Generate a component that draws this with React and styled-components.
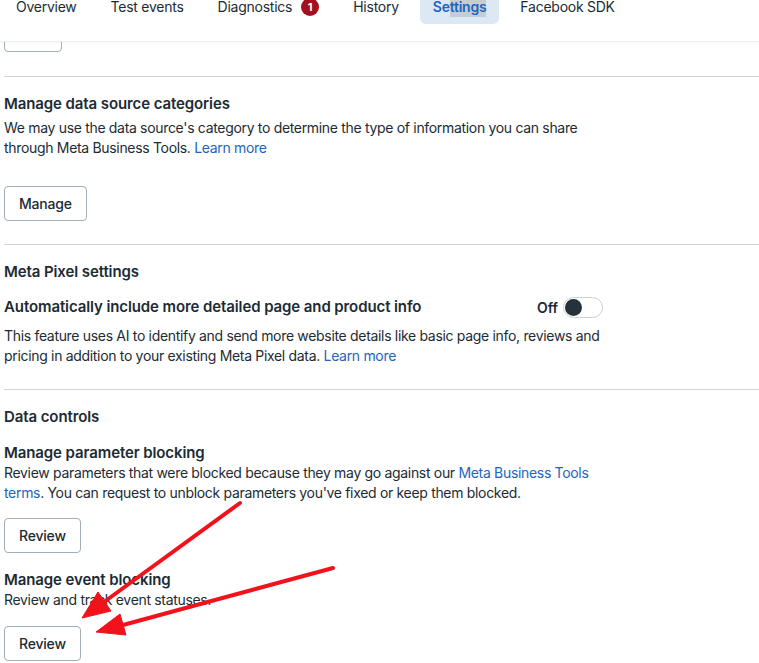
import styled, { createGlobalStyle } from "styled-components";

const Global = createGlobalStyle`
  body {
    margin: 0;
    background: #fff;
    font-family: Inter, "Noto Sans", "Liberation Sans", sans-serif;
    color: #1c2b33;
  }
`;

const Page = styled.div`
  position: relative;
  width: 759px;
  height: 663px;
  overflow: hidden;
  background: #fff;
`;

const TabBar = styled.nav`
  position: relative;
  z-index: 2;
  height: 41px;
  display: flex;
  align-items: flex-start;
  gap: 8px;
  padding-left: 3px;
  background: #fff;
  border-bottom: 1px solid #eceef0;
  box-shadow: 0 1px 2px rgba(0, 0, 0, 0.04);
`;

const Tab = styled.div`
  height: 24px;
  display: flex;
  align-items: flex-start;
  gap: 9px;
  padding: 0 13px;
  font-size: 14px;
  line-height: 14px;
  letter-spacing: -0.25px;
  font-weight: ${(p) => (p.$active ? 600 : 400)};
  color: ${(p) => (p.$active ? "#1d65c1" : "#1c2b33")};
  background: ${(p) => (p.$active ? "#dce8f4" : "transparent")};
  border-radius: 0 0 6px 6px;
`;

const Selected = styled.span`
  background: #c6ccd2;
  padding-bottom: 2px;
`;

const Badge = styled.span`
  width: 18px;
  height: 18px;
  margin-top: -2px;
  border-radius: 50%;
  background: #a3101e;
  color: #fff;
  font-size: 11px;
  font-weight: 700;
  line-height: 18px;
  text-align: center;
  letter-spacing: 0;
`;

const Content = styled.main`
  position: relative;
  z-index: 1;
  padding-left: 4px;
`;

const Button = styled.button`
  display: block;
  height: 35px;
  padding: 0 14px;
  border: 1px solid #a3adb6;
  border-radius: 4px;
  background: #fff;
  font-family: inherit;
  font-size: 14px;
  font-weight: 500;
  letter-spacing: -0.2px;
  color: #1c2b33;
  margin-top: ${(p) => p.$mt || 0}px;
`;

const PeekButton = styled(Button)`
  width: 58px;
  margin-top: -25px;
`;

const Section = styled.section`
  border-top: ${(p) => (p.$first ? "none" : "1px solid #cfd5db")};
  padding: ${(p) => (p.$first ? "0 0 24px" : "17px 0 23px")};
`;

const Inner = styled.div`
  max-width: 604px;
`;

const Title = styled.h2`
  margin: 0;
  font-size: 15px;
  line-height: 20px;
  font-weight: 600;
  letter-spacing: -0.1px;
`;

const SubTitle = styled.h3`
  margin: ${(p) => p.$mt || 0}px 0 0;
  font-size: 15px;
  line-height: 20px;
  font-weight: 600;
  letter-spacing: -0.1px;
`;

const Text = styled.p`
  margin: ${(p) => p.$mt || 0}px 0 0;
  font-size: 14px;
  line-height: 20px;
  letter-spacing: -0.32px;
`;

const Link = styled.a`
  color: #1d65c1;
  text-decoration: none;
`;

const ToggleRow = styled.div`
  margin-top: 15px;
  max-width: 599px;
  display: flex;
  align-items: center;
  justify-content: space-between;
  height: 20px;
`;

const ToggleWrap = styled.div`
  display: flex;
  align-items: center;
  gap: 5px;
  font-size: 14px;
  font-weight: 600;
`;

const Track = styled.span`
  width: 36px;
  height: 19px;
  border: 1px solid #c9d0d6;
  border-radius: 11px;
  background: #fff;
  display: flex;
  align-items: center;
  padding: 0 1px;
`;

const Knob = styled.span`
  width: 17px;
  height: 17px;
  border-radius: 50%;
  background: #25323a;
`;

const Overlay = styled.svg`
  position: absolute;
  left: 0;
  top: 0;
  z-index: 3;
  pointer-events: none;
`;

const tabs = ["Overview", "Test events", "Diagnostics", "History", "Settings", "Facebook SDK"];

const Arrow = ({ x1, y1, tip, base, c1, c2 }) => (
  <g fill="#f2121c" stroke="#f2121c" strokeLinejoin="round">
    <line x1={x1} y1={y1} x2={base[0]} y2={base[1]} strokeWidth="4" strokeLinecap="round" />
    <polygon points={`${tip[0]},${tip[1]} ${c1[0]},${c1[1]} ${c2[0]},${c2[1]}`} strokeWidth="1" />
  </g>
);

const App = () => {
  return (
    <Page>
      <Global />
      <TabBar>
        {tabs.map((t) => (
          <Tab key={t} $active={t === "Settings"}>
            {t === "Settings" ? (
              <span>
                Se<Selected>ttings</Selected>
              </span>
            ) : (
              t
            )}
            {t === "Diagnostics" && <Badge>1</Badge>}
          </Tab>
        ))}
      </TabBar>

      <Content>
        <Section $first>
          <PeekButton />
        </Section>

        <Section>
          <Inner>
            <Title>Manage data source categories</Title>
            <Text $mt={4}>
              We may use the data source's category to determine the type of information you can share
              through Meta Business Tools. <Link>Learn more</Link>
            </Text>
            <Button $mt={28}>Manage</Button>
          </Inner>
        </Section>

        <Section>
          <Inner>
            <Title>Meta Pixel settings</Title>
            <ToggleRow>
              <SubTitle>Automatically include more detailed page and product info</SubTitle>
              <ToggleWrap>
                Off
                <Track>
                  <Knob />
                </Track>
              </ToggleWrap>
            </ToggleRow>
            <Text $mt={9}>
              This feature uses AI to identify and send more website details like basic page info, reviews and
              pricing in addition to your existing Meta Pixel data. <Link>Learn more</Link>
            </Text>
          </Inner>
        </Section>

        <Section>
          <Inner>
            <Title>Data controls</Title>
            <SubTitle $mt={16}>Manage parameter blocking</SubTitle>
            <Text>
              Review parameters that were blocked because they may go against our{" "}
              <Link>Meta Business Tools terms</Link>. You can request to unblock parameters you've fixed or keep
              them blocked.
            </Text>
            <Button $mt={15}>Review</Button>
            <SubTitle $mt={17}>Manage event blocking</SubTitle>
            <Text>Review and track event statuses.</Text>
            <Button $mt={16}>Review</Button>
          </Inner>
        </Section>
      </Content>

      <Overlay width="759" height="663" viewBox="0 0 759 663">
        <Arrow x1={240} y1={503} tip={[82, 618]} base={[104, 602]} c1={[111, 611]} c2={[98, 592]} />
        <Arrow x1={333} y1={568} tip={[96, 632]} base={[123, 625]} c1={[126, 635]} c2={[120, 614]} />
      </Overlay>
    </Page>
  );
};

export default App;
